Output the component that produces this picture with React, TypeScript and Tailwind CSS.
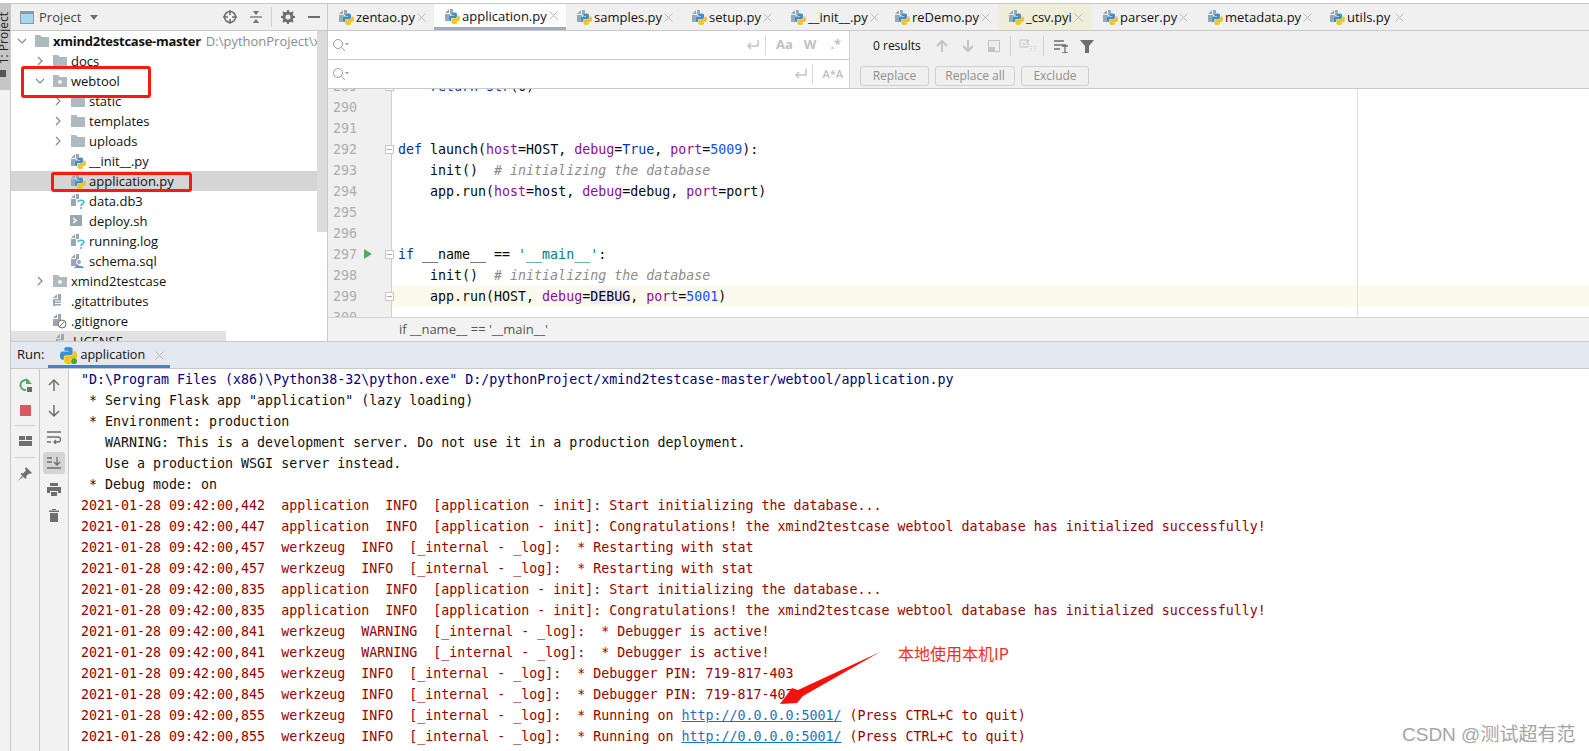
import type { ReactNode } from "react";

const ui = "font-['Open_Sans','Noto_Sans',sans-serif]";
const mono = "font-['DejaVu_Sans_Mono',monospace]";

const pyBlue =
  "M14.25.18l.9.2.73.26.59.3.45.32.34.34.25.34.16.33.1.3.04.26.02.2-.01.13V8.5l-.05.63-.13.55-.21.46-.26.38-.3.31-.33.25-.35.19-.35.14-.33.1-.3.07-.26.04-.21.02H8.77l-.69.05-.59.14-.5.22-.41.27-.33.32-.27.35-.2.36-.15.37-.1.35-.07.32-.04.27-.02.21v3.06H3.17l-.21-.03-.28-.07-.32-.12-.35-.18-.36-.26-.36-.36-.35-.46-.32-.59-.28-.73-.21-.88-.14-1.05-.05-1.23.06-1.22.16-1.04.24-.87.32-.71.36-.57.4-.44.42-.33.42-.24.4-.16.36-.1.32-.05.24-.01h.16l.06.01h8.16v-.83H6.18l-.01-2.75-.02-.37.05-.34.11-.31.17-.28.25-.26.31-.23.38-.2.44-.18.51-.15.58-.12.64-.1.71-.06.77-.04.84-.02 1.27.05z";
const pyYellow =
  "M21.1 6.11l.28.06.32.12.35.18.36.27.36.35.35.47.32.59.28.73.21.88.14 1.04.05 1.23-.06 1.23-.16 1.04-.24.86-.32.71-.36.57-.4.45-.42.33-.42.24-.4.16-.36.09-.32.05-.24.02-.16-.01h-8.22v.82h5.84l.01 2.76.02.36-.05.34-.11.31-.17.29-.25.25-.31.24-.38.2-.44.17-.51.15-.58.13-.64.09-.71.07-.77.04-.84.01-1.27-.04-1.07-.14-.9-.2-.73-.25-.59-.3-.45-.33-.34-.34-.25-.34-.16-.33-.1-.3-.04-.25-.02-.2.01-.13v-5.34l.05-.64.13-.54.21-.46.26-.38.3-.32.33-.24.35-.2.35-.14.33-.1.3-.06.26-.04.21-.02.13-.01h5.84l.69-.05.59-.14.5-.21.41-.28.33-.32.27-.35.2-.36.15-.36.1-.35.07-.32.04-.28.02-.21V6.07h2.09l.14.01.21.03z";

function PyFile() {
  return (
    <svg width="16" height="16" viewBox="0 0 16 16" className="shrink-0">
      <path d="M1 5l4-4v4zM6 1h3v5H6zM1 6h5v7H1z" fill="#9aa7b0" />
      <g transform="translate(4.500 4.500) scale(0.475)">
        <path d={pyBlue} fill="#3d8fc9" stroke="#fff" strokeWidth="1" paintOrder="stroke" />
        <path d={pyYellow} fill="#f2c31c" />
      </g>
    </svg>
  );
}

function Folder({ dot }: { dot?: boolean }) {
  return (
    <svg width="16" height="14" viewBox="0 0 16 14" className="shrink-0">
      <path d="M1 1h5l2 2h7v10H1z" fill="#aeb9c0" />
      {dot && <circle cx="8" cy="8" r="2" fill="#f2f2f2" />}
    </svg>
  );
}

function Chevron({ open }: { open?: boolean }) {
  return (
    <svg width="10" height="10" viewBox="0 0 10 10" className="shrink-0">
      <path d={open ? "M1 3l4 4 4-4" : "M3 1l4 4-4 4"} fill="none" stroke="#7f8b91" strokeWidth="1.200" />
    </svg>
  );
}

function PlainFile({ mark }: { mark: "q" | "sh" | "sql" | "lines" | "no" }) {
  return (
    <svg width="16" height="16" viewBox="0 0 16 16" className="shrink-0">
      {mark === "sh" ? (
        <>
          <rect x="0" y="2" width="12" height="11" fill="#9aa7b0" />
          <path d="M3 5l3 2.500L3 10" fill="none" stroke="#fff" strokeWidth="1.500" />
        </>
      ) : (
        <path d="M1 5l4-4v4zM6 1h3v5H6zM1 6h8v7H1z" fill="#9aa7b0" />
      )}
      {mark === "q" && (
        <>
          <rect x="6" y="6" width="9" height="10" fill="#fff" />
          <path d="M8 9c0-2.500 6-2.500 6 0 0 2-3 1.500-3 4M11 14v2" fill="none" stroke="#40b6e0" strokeWidth="1.500" />
        </>
      )}
      {mark === "sql" && (
        <>
          <circle cx="9" cy="9" r="2.500" fill="#9aa7b0" stroke="#fff" />
          <path d="M4 15c1-3 9-3 10 0z" fill="#40a0d8" />
        </>
      )}
      {mark === "lines" && <path d="M3 8h7M3 10.500h7M3 13h7" stroke="#fff" strokeWidth="1" />}
      {mark === "no" && (
        <>
          <circle cx="10" cy="11" r="4" fill="#fff" stroke="#6e6e6e" />
          <path d="M7.500 13.500l5-5" stroke="#6e6e6e" />
        </>
      )}
    </svg>
  );
}

const tabs = [
  { name: "zentao.py", w: "w-[106px]" },
  { name: "application.py", w: "w-[132px]", active: true },
  { name: "samples.py", w: "w-[115px]" },
  { name: "setup.py", w: "w-[99px]" },
  { name: "__init__.py", w: "w-[104px]" },
  { name: "reDemo.py", w: "w-[114px]" },
  { name: "_csv.pyi", w: "w-[94px]", pinned: true },
  { name: "parser.py", w: "w-[105px]" },
  { name: "metadata.py", w: "w-[122px]" },
  { name: "utils.py", w: "w-[94px]" },
];

function Close() {
  return (
    <svg width="9" height="9" viewBox="0 0 9 9" className="ml-auto mr-[9px] shrink-0">
      <path d="M.5.500l8 8M8.500.500l-8 8" stroke="#b9b9b9" strokeWidth="1" />
    </svg>
  );
}

function Tabs() {
  return (
    <div className="flex h-[27px] border-b border-[#c9c9c9] bg-[#f0f0f0]">
      {tabs.map((t) => (
        <div
          key={t.name}
          className={`flex items-center gap-[2px] pl-[10px] text-[13px] text-[#111] ${t.w} ${
            t.active ? "border-b-[3px] border-[#a3adbd] bg-white" : t.pinned ? "bg-[#eeeedb]" : ""
          }`}
        >
          <PyFile />
          <span className={t.active ? "pt-[3px]" : "pt-[2px]"}>{t.name}</span>
          <Close />
        </div>
      ))}
    </div>
  );
}

function Search() {
  return (
    <svg width="18" height="14" viewBox="0 0 18 14" className="shrink-0">
      <circle cx="6" cy="6" r="4.500" fill="none" stroke="#a0a0a0" />
      <path d="M9.500 9.500l3.500 3.500" stroke="#a0a0a0" />
      <path d="M13 5h4l-2 2.500z" fill="#a0a0a0" />
    </svg>
  );
}

function ReturnIcon() {
  return (
    <svg width="14" height="14" viewBox="0 0 14 14">
      <path d="M13 2v6H3M6 5L3 8l3 3" fill="none" stroke="#c4c4c4" strokeWidth="1.500" />
    </svg>
  );
}

function FindPanel() {
  return (
    <div className="flex h-[58px] border-b border-[#c9c9c9] bg-[#f0f0f0]">
      <div className="flex w-[522px] flex-col border-r border-[#d4d4d4] bg-white">
        <div className="flex h-[29px] items-center border-b border-[#c9c9c9] pl-[4px]">
          <Search />
          <div className="ml-auto flex h-full w-[104px] items-center bg-white">
            <ReturnIcon />
            <div className="ml-[6px] h-[20px] w-px bg-[#d8d8d8]" />
            <span className={`ml-[10px] text-[13px] font-bold text-[#c0c0c0] ${ui}`}>Aa</span>
            <span className={`ml-[11px] text-[13px] font-bold text-[#c0c0c0] ${ui}`}>W</span>
            <span className="ml-[14px] text-[13px] font-bold text-[#c0c0c0]">.*</span>
          </div>
        </div>
        <div className="flex h-[28px] items-center pl-[4px]">
          <Search />
          <div className="ml-auto flex items-center pr-[6px]">
            <ReturnIcon />
            <div className="ml-[5px] mr-[9px] h-[20px] w-px bg-[#d8d8d8]" />
            <span className="text-[11px] font-semibold text-[#c0c0c0]">A*A</span>
          </div>
        </div>
      </div>
      <div className="flex flex-col">
        <div className="flex h-[30px] items-center pl-[23px]">
          <span className="w-[63px] text-[12px] text-[#111]">0 results</span>
          <svg width="12" height="14" viewBox="0 0 12 14"><path d="M6 13V2M1 7l5-5 5 5" fill="none" stroke="#c4c4c4" strokeWidth="2" /></svg>
          <svg width="12" height="14" viewBox="0 0 12 14" className="ml-[14px]"><path d="M6 1v11M1 7l5 5 5-5" fill="none" stroke="#c4c4c4" strokeWidth="2" /></svg>
          <svg width="12" height="12" viewBox="0 0 12 12" className="ml-[14px]"><rect x=".5" y=".5" width="11" height="11" fill="#eee" stroke="#c4c4c4" /><rect x="1" y="7" width="6" height="4" fill="#c4c4c4" /></svg>
          <div className="ml-[10px] h-[20px] w-px bg-[#d0d0d0]" />
          <svg width="18" height="14" viewBox="0 0 18 14" className="ml-[8px]"><path d="M1 1h8v7H1zM3 4l2 2 5-5" fill="none" stroke="#c4c4c4" /><path d="M12 7v6M16 7v6" stroke="#c4c4c4" strokeDasharray="1 1" /></svg>
          <div className="ml-[6px] h-[20px] w-px bg-[#d0d0d0]" />
          <svg width="14" height="13" viewBox="0 0 14 13" className="ml-[10px]"><path d="M0 1h10M0 5h12M0 9h6M8 6h6M11 6v7M8 13h6" stroke="#6e6e6e" strokeWidth="1.300" fill="none" /></svg>
          <svg width="14" height="13" viewBox="0 0 14 13" className="ml-[12px]"><path d="M0 0h14L9 6v7H5V6z" fill="#6e6e6e" /></svg>
        </div>
        <div className="flex gap-[6px] pl-[10px] pt-[5px]">
          {["Replace", "Replace all", "Exclude"].map((b, i) => (
            <div
              key={b}
              className={`flex h-[20px] items-center justify-center rounded-[3px] border border-[#cfcfcf] text-[12px] text-[#8f8f8f] ${
                i === 0 ? "w-[69px]" : i === 1 ? "w-[80px]" : "w-[68px]"
              }`}
            >
              {b}
            </div>
          ))}
        </div>
      </div>
    </div>
  );
}

const K = ({ children }: { children: ReactNode }) => <span className="text-[#0033b3]">{children}</span>;
const P = ({ children }: { children: ReactNode }) => <span className="text-[#871094]">{children}</span>;
const N = ({ children }: { children: ReactNode }) => <span className="text-[#1750eb]">{children}</span>;
const C = ({ children }: { children: ReactNode }) => <span className="italic text-[#8c8c8c]">{children}</span>;
const S = ({ children }: { children: ReactNode }) => <span className="text-[#008080]">{children}</span>;

type CodeLine = { n: number; code?: ReactNode; run?: boolean; fold?: boolean; current?: boolean };

const code: CodeLine[] = [
  { n: 289, code: <>    <K>return</K> <K>str</K>(0)</>, fold: true },
  { n: 290 },
  { n: 291 },
  { n: 292, code: <><K>def</K> launch(<P>host</P>=HOST, <P>debug</P>=<K>True</K>, <P>port</P>=<N>5009</N>):</>, fold: true },
  { n: 293, code: <>    init()  <C># initializing the database</C></> },
  { n: 294, code: <>    app.run(<P>host</P>=host, <P>debug</P>=debug, <P>port</P>=port)</> },
  { n: 295 },
  { n: 296 },
  { n: 297, code: <><K>if</K> __name__ == <S>'__main__'</S>:</>, run: true, fold: true },
  { n: 298, code: <>    init()  <C># initializing the database</C></> },
  { n: 299, code: <>    app.run(HOST, <P>debug</P>=<span className="bg-[#edebfc]">DEBUG</span>, <P>port</P>=<N>5001</N>)</>, current: true, fold: true },
  { n: 300 },
];

function Editor() {
  return (
    <div className={`relative min-h-0 flex-1 overflow-hidden ${mono} text-[13.3px]`}>
      <div className="absolute inset-y-0 left-[1029px] w-px bg-[#e0e0e0]" />
      <div className="mt-[-13px]">
        {code.map((l) => (
          <div key={l.n} className={`flex h-[21px] leading-[21px] ${l.current ? "bg-[#fcfaed]" : ""}`}>
            <div className="relative flex w-[64px] shrink-0 border-r border-[#d0d0d0] bg-[#f0f0f0] pl-[5px] text-[#adadad]">
              {l.n}
              {l.run && (
                <svg width="9" height="10" viewBox="0 0 9 10" className="absolute left-[35px] top-[5px]">
                  <path d="M1 0l8 5-8 5z" fill="#59a869" />
                </svg>
              )}
              {l.fold && (
                <div className="absolute left-[57px] top-[6px] flex h-[9px] w-[9px] items-center justify-center border border-[#c8c8c8] bg-white">
                  <div className="h-px w-[5px] bg-[#aaa]" />
                </div>
              )}
            </div>
            <div className="z-10 whitespace-pre pl-[6px] text-[#080808]">{l.code}</div>
          </div>
        ))}
      </div>
    </div>
  );
}

type TreeRow = { level: number; name: string; chevron?: "open" | "closed"; icon: ReactNode; selected?: boolean; root?: boolean };

const tree: TreeRow[] = [
  { level: 0, name: "xmind2testcase-master", chevron: "open", icon: <Folder />, root: true },
  { level: 1, name: "docs", chevron: "closed", icon: <Folder /> },
  { level: 1, name: "webtool", chevron: "open", icon: <Folder dot /> },
  { level: 2, name: "static", chevron: "closed", icon: <Folder /> },
  { level: 2, name: "templates", chevron: "closed", icon: <Folder /> },
  { level: 2, name: "uploads", chevron: "closed", icon: <Folder /> },
  { level: 2, name: "__init__.py", icon: <PyFile /> },
  { level: 2, name: "application.py", icon: <PyFile />, selected: true },
  { level: 2, name: "data.db3", icon: <PlainFile mark="q" /> },
  { level: 2, name: "deploy.sh", icon: <PlainFile mark="sh" /> },
  { level: 2, name: "running.log", icon: <PlainFile mark="q" /> },
  { level: 2, name: "schema.sql", icon: <PlainFile mark="sql" /> },
  { level: 1, name: "xmind2testcase", chevron: "closed", icon: <Folder dot /> },
  { level: 1, name: ".gitattributes", icon: <PlainFile mark="lines" /> },
  { level: 1, name: ".gitignore", icon: <PlainFile mark="no" /> },
];

function ProjectPanel() {
  return (
    <div className={`flex w-[317px] shrink-0 flex-col border-r border-[#c9c9c9] ${ui}`}>
      <div className="flex h-[27px] shrink-0 items-center border-b border-[#c9c9c9] bg-[#f0f0f0] pl-[9px] text-[#555]">
        <svg width="14" height="13" viewBox="0 0 14 13">
          <rect x=".5" y=".5" width="13" height="12" fill="#a5d8f0" stroke="#8a9aa4" />
          <rect x="1" y="1" width="12" height="2" fill="#8a9aa4" />
        </svg>
        <span className="ml-[5px] pt-[2px] text-[13px] text-[#444]">Project</span>
        <svg width="8" height="5" viewBox="0 0 8 5" className="ml-[9px]"><path d="M0 0h8L4 5z" fill="#6e6e6e" /></svg>
        <div className="ml-auto flex items-center pr-[7px]">
          <svg width="14" height="14" viewBox="0 0 14 14"><circle cx="7" cy="7" r="5.500" fill="none" stroke="#6e6e6e" strokeWidth="1.500" /><path d="M7 0v5M7 9v5M0 7h5M9 7h5" stroke="#6e6e6e" strokeWidth="1.500" /></svg>
          <svg width="12" height="14" viewBox="0 0 12 14" className="ml-[13px]"><path d="M0 7h12" stroke="#6e6e6e" strokeWidth="1.300" /><path d="M3 1h6L6 5zM3 13h6L6 9z" fill="#6e6e6e" /></svg>
          <div className="ml-[9px] h-[20px] w-px bg-[#d0d0d0]" />
          <svg width="14" height="14" viewBox="0 0 14 14" className="ml-[9px]"><circle cx="7" cy="7" r="4" fill="none" stroke="#6e6e6e" strokeWidth="3" /><path d="M7 0v3M7 11v3M0 7h3M11 7h3M2 2l2 2M10 10l2 2M12 2l-2 2M4 10l-2 2" stroke="#6e6e6e" strokeWidth="2" /></svg>
          <div className="ml-[13px] h-[2px] w-[12px] bg-[#6e6e6e]" />
        </div>
      </div>
      <div className="relative min-h-0 flex-1 overflow-hidden bg-white">
        <div className="absolute right-0 top-0 z-10 h-[201px] w-[10px] bg-[#dcdcdc]" />
        {tree.map((r) => (
          <div
            key={r.name}
            className={`flex h-[20px] items-center text-[13px] text-[#111] ${r.selected ? "bg-[#d5d5d5]" : ""}`}
          >
            <div className={`flex items-center ${r.level === 0 ? "pl-[6px]" : r.level === 1 ? "pl-[24px]" : "pl-[42px]"}`}>
              <div className="flex w-[15px] justify-start">{r.chevron && <Chevron open={r.chevron === "open"} />}</div>
              <div className="flex w-[20px] justify-center">{r.icon}</div>
              <span className={`ml-[1px] whitespace-nowrap pt-[2px] ${r.root ? "font-bold tracking-[-0.25px]" : ""}`}>{r.name}</span>
              {r.root && <span className="ml-[5px] whitespace-nowrap pt-[2px] text-[#8c8c8c]">D:\pythonProject\xmind2testcase-master</span>}
            </div>
          </div>
        ))}
        <div className="flex h-[20px] w-[215px] items-center bg-[#e2e2e2] pl-[44px] text-[13px] text-[#111]">
          <PlainFile mark="lines" />
          <span className="ml-[2px] pt-[2px]">LICENSE</span>
        </div>
      </div>
    </div>
  );
}

type LogLine = { t: string; c: "cmd" | "out" | "err"; link?: boolean };

const ts = "2021-01-28 09:42:";
const log: LogLine[] = [
  { t: '"D:\\Program Files (x86)\\Python38-32\\python.exe" D:/pythonProject/xmind2testcase-master/webtool/application.py', c: "cmd" },
  { t: ' * Serving Flask app "application" (lazy loading)', c: "out" },
  { t: " * Environment: production", c: "out" },
  { t: "   WARNING: This is a development server. Do not use it in a production deployment.", c: "out" },
  { t: "   Use a production WSGI server instead.", c: "out" },
  { t: " * Debug mode: on", c: "out" },
  { t: ts + "00,442  application  INFO  [application - init]: Start initializing the database...", c: "err" },
  { t: ts + "00,447  application  INFO  [application - init]: Congratulations! the xmind2testcase webtool database has initialized successfully!", c: "err" },
  { t: ts + "00,457  werkzeug  INFO  [_internal - _log]:  * Restarting with stat", c: "err" },
  { t: ts + "00,457  werkzeug  INFO  [_internal - _log]:  * Restarting with stat", c: "err" },
  { t: ts + "00,835  application  INFO  [application - init]: Start initializing the database...", c: "err" },
  { t: ts + "00,835  application  INFO  [application - init]: Congratulations! the xmind2testcase webtool database has initialized successfully!", c: "err" },
  { t: ts + "00,841  werkzeug  WARNING  [_internal - _log]:  * Debugger is active!", c: "err" },
  { t: ts + "00,841  werkzeug  WARNING  [_internal - _log]:  * Debugger is active!", c: "err" },
  { t: ts + "00,845  werkzeug  INFO  [_internal - _log]:  * Debugger PIN: 719-817-403", c: "err" },
  { t: ts + "00,845  werkzeug  INFO  [_internal - _log]:  * Debugger PIN: 719-817-403", c: "err" },
  { t: ts + "00,855  werkzeug  INFO  [_internal - _log]:  * Running on ", c: "err", link: true },
  { t: ts + "00,855  werkzeug  INFO  [_internal - _log]:  * Running on ", c: "err", link: true },
];

function ToolBtn({ children, active }: { children: ReactNode; active?: boolean }) {
  return (
    <div className={`flex h-[22px] w-[22px] items-center justify-center rounded-[3px] ${active ? "bg-[#d4d4d4]" : ""}`}>{children}</div>
  );
}

function Console() {
  return (
    <div className="flex min-h-0 flex-1">
      <div className="flex w-[29px] shrink-0 flex-col items-center border-r border-[#c9c9c9] bg-[#f2f2f2] pt-[5px]">
        <ToolBtn>
          <svg width="14" height="14" viewBox="0 0 14 14"><path d="M11 3.500A5 5 0 1 0 8 12" fill="none" stroke="#59a869" strokeWidth="2" /><path d="M8 0v6h6z" fill="#59a869" /><rect x="9" y="9" width="5" height="5" fill="#6e6e6e" /></svg>
        </ToolBtn>
        <div className="mt-[3px]">
          <ToolBtn><div className="h-[11px] w-[11px] bg-[#db5860]" /></ToolBtn>
        </div>
        <div className="my-[4px] h-px w-[20px] bg-[#d0d0d0]" />
        <ToolBtn>
          <svg width="13" height="10" viewBox="0 0 13 10"><path d="M0 0h6v4H0zM7 0h6v4H7zM0 5h13v5H0z" fill="#6e6e6e" /></svg>
        </ToolBtn>
        <div className="my-[5px] h-px w-[20px] bg-[#d0d0d0]" />
        <ToolBtn>
          <svg width="14" height="14" viewBox="0 0 14 14"><path d="M8 0l6 6-2 1-1-.5-3 3 .5 1.500-1 1-5-5 1-1 1.500.5 3-3L7 2zM4 9l-4 5 5-4z" fill="#6e6e6e" /></svg>
        </ToolBtn>
      </div>
      <div className="flex w-[29px] shrink-0 flex-col items-center gap-[4px] border-r border-[#c9c9c9] bg-[#f2f2f2] pt-[5px]">
        <ToolBtn><svg width="12" height="14" viewBox="0 0 12 14"><path d="M6 13V2M1 7l5-5 5 5" fill="none" stroke="#6e6e6e" strokeWidth="1.500" /></svg></ToolBtn>
        <ToolBtn><svg width="12" height="14" viewBox="0 0 12 14"><path d="M6 1v11M1 7l5 5 5-5" fill="none" stroke="#6e6e6e" strokeWidth="1.500" /></svg></ToolBtn>
        <ToolBtn><svg width="14" height="13" viewBox="0 0 14 13"><path d="M0 1h14M0 6h11a2 2 0 0 1 0 5H7M9 9l-2 2 2 2M0 11h4" fill="none" stroke="#6e6e6e" strokeWidth="1.300" /></svg></ToolBtn>
        <ToolBtn active><svg width="14" height="12" viewBox="0 0 14 12"><path d="M0 1h5M0 5h5M0 11h14M10 0v7M7 5l3 3 3-3" fill="none" stroke="#6e6e6e" strokeWidth="1.300" /></svg></ToolBtn>
        <ToolBtn><svg width="14" height="13" viewBox="0 0 14 13"><path d="M3 0h8v3H3zM0 4h14v6h-3V8H3v2H0zM4 9h6v4H4z" fill="#6e6e6e" /></svg></ToolBtn>
        <ToolBtn><svg width="10" height="13" viewBox="0 0 10 13"><path d="M0 1.500h10v1.500H0zM3 0h4v1H3zM1 4h8v9H1z" fill="#6e6e6e" /></svg></ToolBtn>
      </div>
      <div className={`min-w-0 flex-1 overflow-hidden bg-white pl-[12px] text-[13.3px] leading-[21px] whitespace-pre ${mono}`}>
        {log.map((l, i) => (
          <div
            key={i}
            className={`h-[21px] ${l.c === "cmd" ? "text-[#000080]" : l.c === "out" ? "text-[#111]" : "text-[#990000]"}`}
          >
            {l.t}
            {l.link && (
              <>
                <span className="text-[#1a73c0] underline">http://0.0.0.0:5001/</span> (Press CTRL+C to quit)
              </>
            )}
          </div>
        ))}
      </div>
    </div>
  );
}

export default function App() {
  return (
    <div className={`relative flex h-[751px] w-[1589px] flex-col overflow-hidden bg-white ${ui}`}>
      <div className="h-[3px] shrink-0 bg-white" />
      <div className="flex min-h-0 flex-1">
        <div className="flex w-[11px] shrink-0 flex-col border-r border-t border-[#c9c9c9] bg-[#f2f2f2]">
          <div className="relative h-[86px] overflow-hidden bg-[#c6c6c6]">
            <div className="absolute left-[-3px] top-[8px] rotate-180 whitespace-nowrap text-[12px] leading-[14px] text-[#222] [writing-mode:vertical-rl]">
              1: Project
            </div>
            <div className="absolute left-0 top-[66px] h-[7px] w-[6px] bg-[#555]" />
          </div>
        </div>
        <div className="flex min-w-0 flex-1 flex-col">
          <div className="flex h-[338px] shrink-0 border-t border-[#c9c9c9]">
            <ProjectPanel />
            <div className="flex min-w-0 flex-1 flex-col">
              <Tabs />
              <FindPanel />
              <Editor />
              <div className="flex h-[24px] shrink-0 items-center border-t border-[#d4d4d4] bg-[#f2f2f2] pl-[71px] text-[13px] text-[#555]">
                if __name__ == '__main__'
              </div>
            </div>
          </div>
          <div className="flex h-[28px] shrink-0 items-center border-y border-[#c9c9c9] bg-[#e4e8f0] pl-[6px] text-[13px] text-[#111]">
            <span>Run:</span>
            <div className="ml-[4px] flex h-full w-[122px] items-center gap-[3px] border-b-[3px] border-[#4083c9] pl-[12px] pt-[3px] text-[12.6px]">
              <svg width="17" height="17" viewBox="0 0 24 24" className="shrink-0">
                <path d={pyBlue} fill="#3d8fc9" />
                <path d={pyYellow} fill="#f2c31c" />
                <circle cx="20" cy="20" r="4" fill="#3fae3f" />
              </svg>
              <span>application</span>
              <svg width="9" height="9" viewBox="0 0 9 9" className="ml-[7px]"><path d="M.5.500l8 8M8.500.500l-8 8" stroke="#b9b9b9" /></svg>
            </div>
          </div>
          <Console />
        </div>
      </div>

      {/* red annotations drawn over the screenshot */}
      <div className="absolute left-[21px] top-[66px] h-[32px] w-[130px] rounded-[3px] border-[3px] border-[#fb1a10]" />
      <div className="absolute left-[51px] top-[172px] h-[20px] w-[141px] rounded-[3px] border-[3px] border-[#fb1a10]" />
      <svg width="110" height="62" viewBox="0 0 110 62" className="absolute left-[775px] top-[650px]">
        <path d="M5 54L17 38l6 2L105 2 28 46l-6 7z" fill="#f5120c" />
      </svg>
      <div className="absolute left-[898px] top-[641px] text-[16px] text-[#fb2a1c] font-['Noto_Sans_CJK_SC',sans-serif]">本地使用本机IP</div>
      <div className="absolute left-[1402px] top-[721px] text-[19px] text-[#a5a5a5] font-['Liberation_Sans','Noto_Sans_CJK_SC',sans-serif]">CSDN @测试超有范</div>
    </div>
  );
}
